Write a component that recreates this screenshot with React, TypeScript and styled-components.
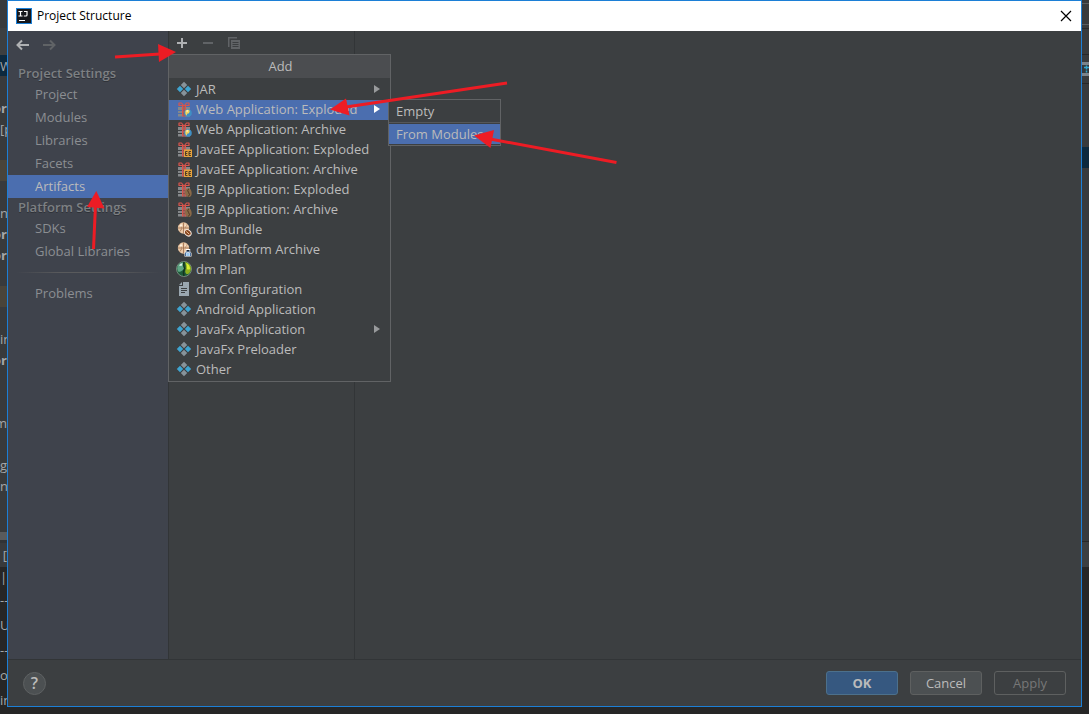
import React from "react";
import styled, { createGlobalStyle } from "styled-components";

const Global = createGlobalStyle`
  * { box-sizing: border-box; }
  body { margin: 0; background: #2b2b2b; font-family: "Open Sans", "Noto Sans", sans-serif; font-size: 13px; line-height: 20px; color: #bbbbbb; }
  button { font: inherit; color: inherit; background: none; border: 0; padding: 0; margin: 0; text-align: left; cursor: default; }
  ul { list-style: none; margin: 0; padding: 0; }
  h1, h2 { margin: 0; font-size: 13px; }
`;

const Desktop = styled.div`
  position: relative;
  display: flex;
  min-height: 100vh;
  padding-bottom: 7px;
  background: #262626;
  overflow: hidden;
`;

const Strip = styled.div`
  flex: none;
  width: 7px;
  overflow: hidden;
  margin-bottom: -7px;
  background: #262626;
`;

const StripRow = styled.div<{ $h?: number; $bg?: string; $bold?: boolean; $end?: boolean }>`
  display: flex;
  justify-content: ${(p) => (p.$end ? "flex-end" : "flex-start")};
  align-items: center;
  height: ${(p) => p.$h ?? 21}px;
  background: ${(p) => p.$bg ?? "#383a3c"};
  color: #a4a6a8;
  font-weight: ${(p) => (p.$bold ? 700 : 400)};
  overflow: hidden;
  white-space: nowrap;
`;

const Dialog = styled.section`
  position: relative;
  flex: 1;
  min-width: 0;
  display: flex;
  flex-direction: column;
  border: 1px solid #1c7fd6;
  background: #3c3f41;
`;

const TitleBar = styled.header`
  display: flex;
  align-items: center;
  gap: 5px;
  height: 30px;
  padding: 0 7px 0 8px;
  background: #ffffff;
`;

const Title = styled.h1`
  flex: 1;
  color: #000000;
  font-size: 12px;
  font-weight: 400;
`;

const IconButton = styled.button<{ $dim?: boolean }>`
  display: flex;
  align-items: center;
  justify-content: center;
  width: 16px;
  height: 16px;
  color: ${(p) => (p.$dim ? "#606366" : "#afb1b3")};
`;

const Body = styled.div`
  flex: 1;
  display: flex;
`;

const Sidebar = styled.nav`
  width: 160px;
  background: #3f434c;
`;

const NavHistory = styled.div`
  display: flex;
  gap: 10px;
  height: 33px;
  padding: 6px 7px;
`;

const NavHeading = styled.h2`
  height: 19px;
  padding-left: 10px;
  line-height: 19px;
  font-weight: 600;
  color: #7d8083;
  text-shadow: 0 1px 0 #2f3238;
`;

const NavItem = styled.button<{ $selected?: boolean }>`
  display: block;
  width: 100%;
  height: 23px;
  padding-left: 27px;
  line-height: 23px;
  color: ${(p) => (p.$selected ? "#bbbbbb" : "#8b8e92")};
  background: ${(p) => (p.$selected ? "#4b6eaf" : "transparent")};
`;

const NavRule = styled.hr`
  height: 1px;
  margin: 9px 8px;
  border: 0;
  background: linear-gradient(to right, #3f434c, #595a5c 30%, #595a5c 70%, #3f434c);
`;

const ListPane = styled.div`
  position: relative;
  width: 187px;
  border-left: 1px solid #323537;
  border-right: 1px solid #323537;
`;

const Toolbar = styled.div`
  display: flex;
  gap: 10px;
  padding: 4px 5px;
`;

const Popup = styled.div`
  position: absolute;
  top: 23px;
  left: -1px;
  z-index: 1;
  width: 223px;
  padding-bottom: 1px;
  border: 1px solid #616365;
  background: #3c3f41;
`;

const PopupTitle = styled.h2`
  height: 23px;
  margin-bottom: 2px;
  padding-left: 2px;
  line-height: 22px;
  text-align: center;
  font-weight: 400;
  background: #4b4d50;
`;

const MenuRow = styled.li`
  position: relative;
`;

const MenuItem = styled.button<{ $selected?: boolean }>`
  display: flex;
  align-items: center;
  gap: 4px;
  width: 100%;
  height: 20px;
  padding: 0 9px 2px 7px;
  white-space: nowrap;
  background: ${(p) => (p.$selected ? "#4b6eaf" : "transparent")};
`;

const Label = styled.span`
  flex: 1;
`;

const Submenu = styled.ul`
  position: absolute;
  top: -1px;
  left: 219px;
  z-index: 2;
  width: 113px;
  padding-bottom: 1px;
  border: 1px solid #616365;
  background: #3c3f41;

  ${MenuRow} + ${MenuRow} {
    border-top: 1px solid #555759;
    padding-top: 1px;
  }
  ${MenuRow}:first-child {
    padding: 1px 0;
  }
  ${MenuItem} {
    padding-bottom: 0;
  }
`;

const Editor = styled.main`
  flex: 1;
`;

const Footer = styled.footer`
  display: flex;
  align-items: center;
  gap: 12px;
  height: 47px;
  padding: 0 15px;
  border-top: 1px solid #323537;
`;

const HelpButton = styled.button`
  width: 23px;
  height: 23px;
  margin-right: auto;
  border: 1px solid #5e6162;
  border-radius: 50%;
  background: #4c5052;
  font-size: 16px;
  font-weight: 600;
  line-height: 20px;
  text-align: center;
`;

const ActionButton = styled.button<{ $kind?: "primary" | "disabled" }>`
  width: 72px;
  height: 24px;
  border: 1px solid ${(p) => (p.$kind === "primary" ? "#4c708c" : "#5e6060")};
  border-radius: 3px;
  line-height: 22px;
  text-align: center;
  font-weight: ${(p) => (p.$kind === "primary" ? 700 : 400)};
  color: ${(p) => (p.$kind === "disabled" ? "#777777" : "#bbbbbb")};
  background: ${(p) => (p.$kind === "primary" ? "#365880" : p.$kind === "disabled" ? "transparent" : "#4c5052")};
`;

const Annotations = styled.svg`
  position: absolute;
  top: 0;
  left: 0;
  z-index: 3;
  pointer-events: none;
`;

type IconKind = "artifact" | "web" | "ee" | "ejb" | "bundle" | "par" | "plan" | "config";

const Gift = () => (
  <>
    <path d="M2 6h12v3H2zM2 10h12v2H2zM2 13h12v2.500H2z" fill="#85888a" />
    <path d="M6 5h1.500v10.500H6zM8.500 5H10v10.500H8.500z" fill="#d9554d" />
    <path d="M7.500 5h1v10.500h-1z" fill="#9b5550" />
    <path d="M7.500 4.500 5.500 2H3v2.500zM8.500 4.500l2-2.500H13v2.500z" fill="none" stroke="#d9554d" strokeWidth="1.200" strokeLinejoin="round" />
  </>
);

const Walnut = () => (
  <>
    <circle cx="7.500" cy="7" r="5.700" fill="#e9c8a6" />
    <path d="M7.500 1.500v11M2 7h11M3.500 3.500q2 1 2 3M11.500 3.500q-2 1-2 3M3.500 10.500q2-1 2-3" fill="none" stroke="#9b6a4a" strokeWidth=".8" />
    <circle cx="5" cy="4.500" r="1.200" fill="#fff0dc" />
    <circle cx="9.500" cy="4.500" r="1" fill="#f8e0c4" />
  </>
);

function ItemIcon({ kind }: { kind: IconKind }) {
  return (
    <svg width="16" height="16" viewBox="0 0 16 16" aria-hidden="true">
      {kind === "artifact" && (
        <>
          <path d="M8 .8 11.200 4 8 7.200 4.800 4zM8 8.800 11.200 12 8 15.200 4.800 12z" fill="#87939a" />
          <path d="M4 4.800 7.200 8 4 11.200.8 8zM12 4.800 15.200 8 12 11.200 8.800 8z" fill="#3fa5d1" />
        </>
      )}
      {(kind === "web" || kind === "ee" || kind === "ejb") && <Gift />}
      {kind === "web" && (
        <>
          <circle cx="12" cy="12" r="3.800" fill="#3f8fc4" />
          <path d="M9.300 9.700q3-2 4.500.3l-.8 2.200-1.800.5-.5 2q-2-1.500-1.400-5z" fill="#f3d35e" />
          <path d="M10 9.900q1-1 2.300-.6l-1 1.700z" fill="#fff7d5" />
        </>
      )}
      {kind === "ee" && (
        <>
          <path d="M8 8.500h8v7.500H8z" fill="#e8a33d" />
          <path d="M11.500 10.500H9.500v4h2M9.500 12.500h1.800M15 10.500h-2v4h2M13 12.500h1.800" fill="none" stroke="#3b3325" strokeWidth=".9" />
        </>
      )}
      {kind === "ejb" && (
        <>
          <ellipse cx="12.300" cy="11.700" rx="3.300" ry="4.300" transform="rotate(-8 12 11.500)" fill="#8a6a48" />
          <path d="M12.700 7.700q-2 2 0 4t-.6 4" fill="none" stroke="#4f3924" />
        </>
      )}
      {(kind === "bundle" || kind === "par") && <Walnut />}
      {kind === "bundle" && (
        <>
          <ellipse cx="11.800" cy="11.800" rx="3.600" ry="2.800" transform="rotate(40 11.800 11.800)" fill="#87451e" stroke="#f4e7dc" />
          <path d="m10.300 10.500 3 2.700" stroke="#f0c79e" />
        </>
      )}
      {kind === "par" && (
        <>
          <path d="M9.800 8h4.400v2.500l1.300 1.500v3.600h-7V12l1.300-1.500z" fill="#fff" />
          <path d="M10.500 9h3v1.500h-3z" fill="#1b2430" />
          <path d="M10.300 12h3.400v3h-3.400z" fill="#9ac7ef" />
          <path d="M9.500 15v-3l1-1.200h3l1 1.200v3" fill="none" stroke="#1e4a80" strokeWidth=".8" />
        </>
      )}
      {kind === "plan" && (
        <>
          <circle cx="8" cy="8" r="7.500" fill="#1e5a3a" stroke="#b8c4b6" strokeWidth=".5" />
          <path d="M7 1.200Q1.500 2 1.200 7.500q.3 2 1.500 3.500 4.500-1 5.500-4Q7.500 4 7 1.200z" fill="#5fa584" />
          <path d="M9 1q6 1.500 6 7-.5 4.500-4 5.300Q8.500 12 9.500 9 10.500 5 9 1z" fill="#8fb01e" />
          <path d="M10 2q4 1.500 4 6-2 1-3 0 .3-3-1-6z" fill="#d9ee35" />
          <path d="M8 1q-1 4 .8 6.500Q6.500 11 8 15" fill="none" stroke="#15331e" strokeWidth="1.300" />
          <path d="M3 4.500Q4.500 2.200 6.500 2.200L5.500 5z" fill="#e4f2ea" />
        </>
      )}
      {kind === "config" && (
        <>
          <path d="M7 1h6v14H3V5h4zM6 1v3H3z" fill="#9aa7b0" />
          <path d="M5 7.500h6M5 9.500h6M5 11.500h4" stroke="#3c3f41" />
        </>
      )}
    </svg>
  );
}

const Chevron = ({ active }: { active?: boolean }) => (
  <svg width="8" height="10" viewBox="0 0 8 10" aria-hidden="true">
    <path d="M1 1v8l6-4z" fill={active ? "#ffffff" : "#989a9c"} />
  </svg>
);

const artifactTypes: { label: string; icon: IconKind; more?: boolean; open?: boolean }[] = [
  { label: "JAR", icon: "artifact", more: true },
  { label: "Web Application: Exploded", icon: "web", more: true, open: true },
  { label: "Web Application: Archive", icon: "web" },
  { label: "JavaEE Application: Exploded", icon: "ee" },
  { label: "JavaEE Application: Archive", icon: "ee" },
  { label: "EJB Application: Exploded", icon: "ejb" },
  { label: "EJB Application: Archive", icon: "ejb" },
  { label: "dm Bundle", icon: "bundle" },
  { label: "dm Platform Archive", icon: "par" },
  { label: "dm Plan", icon: "plan" },
  { label: "dm Configuration", icon: "config" },
  { label: "Android Application", icon: "artifact" },
  { label: "JavaFx Application", icon: "artifact", more: true },
  { label: "JavaFx Preloader", icon: "artifact" },
  { label: "Other", icon: "artifact" },
];

const codeLines: { text?: string; bg?: string; bold?: boolean; end?: boolean }[] = [
  { text: "W", bg: "#0d293e" },
  {},
  { text: "or", bold: true, end: true },
  { text: "[p" },
  {},
  { bg: "#49443a" },
  {},
  { text: "ns" },
  { text: "or", bold: true, end: true },
  { text: "or", bold: true, end: true },
  {},
  { bg: "#49443a" },
  {},
  { text: "in" },
  { text: "or", bold: true, end: true },
  {},
  {},
  { text: "m", end: true },
  {},
  { text: "g" },
  { text: "ns" },
];

const consoleLines = ["|", "--", "U", "--", "o", "in"];

export default function App() {
  return (
    <>
      <Global />
      <Desktop>
        <Strip aria-hidden="true">
          <StripRow $h={28} />
          <StripRow $h={27} $bg="#3c3f41" />
          {codeLines.map((line, i) => (
            <StripRow key={i} $bg={line.bg} $bold={line.bold} $end={line.end}>
              {line.text}
            </StripRow>
          ))}
          <StripRow $h={36} />
          <StripRow $h={8} $bg="#595b5d" />
          <StripRow $h={3} $bg="#313335" />
          <StripRow $h={24} $end>[</StripRow>
          {consoleLines.map((text, i) => (
            <StripRow key={i} $h={i ? 25 : 20} $bg="#262626">
              {text}
            </StripRow>
          ))}
        </Strip>

        <Dialog role="dialog" aria-labelledby="dialog-title">
          <TitleBar>
            <svg width="16" height="16" viewBox="0 0 16 16" aria-hidden="true">
              <path d="M0 0h16v16H0z" fill="#1c7fd6" />
              <path d="M1 1h14v14H1z" fill="#15171c" />
              <path d="M2.500 3.500h4M4.500 3.500v4.500M2.500 8h4M8 3.500h3V7q0 1-1 1H7.800M3 12.500h6" fill="none" stroke="#fff" strokeWidth="1.200" />
            </svg>
            <Title id="dialog-title">Project Structure</Title>
            <IconButton aria-label="Close">
              <svg width="12" height="12" viewBox="0 0 12 12">
                <path d="m1 1 10 10M11 1 1 11" stroke="#000" strokeWidth="1.200" />
              </svg>
            </IconButton>
          </TitleBar>

          <Body>
            <Sidebar>
              <NavHistory>
                <IconButton aria-label="Back">
                  <svg width="16" height="16" viewBox="0 0 16 16">
                    <path d="M14 8H2.500M7 3.500 2.500 8 7 12.500" fill="none" stroke="currentColor" strokeWidth="2" />
                  </svg>
                </IconButton>
                <IconButton aria-label="Forward" $dim>
                  <svg width="16" height="16" viewBox="0 0 16 16">
                    <path d="M2 8h11.500M9 3.500 13.500 8 9 12.500" fill="none" stroke="currentColor" strokeWidth="2" />
                  </svg>
                </IconButton>
              </NavHistory>
              <NavHeading>Project Settings</NavHeading>
              <NavItem>Project</NavItem>
              <NavItem>Modules</NavItem>
              <NavItem>Libraries</NavItem>
              <NavItem>Facets</NavItem>
              <NavItem $selected aria-current="page">Artifacts</NavItem>
              <NavHeading>Platform Settings</NavHeading>
              <NavItem>SDKs</NavItem>
              <NavItem>Global Libraries</NavItem>
              <NavRule />
              <NavItem>Problems</NavItem>
            </Sidebar>

            <ListPane>
              <Toolbar>
                <IconButton aria-label="Add">
                  <svg width="16" height="16" viewBox="0 0 16 16">
                    <path d="M8 3v10M3 8h10" stroke="currentColor" strokeWidth="2" />
                  </svg>
                </IconButton>
                <IconButton aria-label="Remove" $dim>
                  <svg width="16" height="16" viewBox="0 0 16 16">
                    <path d="M3 8h10" stroke="currentColor" strokeWidth="2" />
                  </svg>
                </IconButton>
                <IconButton aria-label="Copy" $dim>
                  <svg width="16" height="16" viewBox="0 0 16 16">
                    <path d="M2 2h9v1.500H3.500V12H2z" fill="currentColor" />
                    <path d="M5 5h9v9H5z" fill="currentColor" />
                    <path d="M6.500 7.500h6M6.500 9.500h6M6.500 11.500h6" stroke="#3c3f41" />
                  </svg>
                </IconButton>
              </Toolbar>

              <Popup>
                <PopupTitle>Add</PopupTitle>
                <ul>
                  {artifactTypes.map((item) => (
                    <MenuRow key={item.label}>
                      <MenuItem $selected={item.open}>
                        <ItemIcon kind={item.icon} />
                        <Label>{item.label}</Label>
                        {item.more && <Chevron active={item.open} />}
                      </MenuItem>
                      {item.open && (
                        <Submenu>
                          <MenuRow>
                            <MenuItem>Empty</MenuItem>
                          </MenuRow>
                          <MenuRow>
                            <MenuItem $selected>From Modules</MenuItem>
                          </MenuRow>
                        </Submenu>
                      )}
                    </MenuRow>
                  ))}
                </ul>
              </Popup>
            </ListPane>

            <Editor />
          </Body>

          <Footer>
            <HelpButton aria-label="Help">?</HelpButton>
            <ActionButton $kind="primary">OK</ActionButton>
            <ActionButton>Cancel</ActionButton>
            <ActionButton $kind="disabled" disabled>Apply</ActionButton>
          </Footer>
        </Dialog>

        <Strip aria-hidden="true">
          <StripRow $h={3} />
          <StripRow $h={1} $bg="#5a5d5f" />
          <StripRow $h={20} />
          <StripRow $h={1} $bg="#5a5d5f" />
          <StripRow $h={3} />
          <StripRow $h={1} $bg="#282828" />
          <StripRow $h={25} />
          <StripRow $h={1} $bg="#282828" />
          <StripRow $h={7} />
          <StripRow $h={14} $bg="#7b838a">
            <svg width="7" height="14" viewBox="0 0 7 14">
              <path d="M0 3h7v8H0z" fill="#34383b" />
              <path d="M2 5.500h5M4.500 3.500v4M4.500 8.500v2" stroke="#35a5cc" strokeWidth="1.500" />
            </svg>
          </StripRow>
          <StripRow $h={7} />
          <StripRow $h={1} $bg="#282828" />
          <StripRow $h={63} />
          <StripRow $bg="#0d293e" />
          <StripRow $h={373} />
          <StripRow $h={1} $bg="#282828" />
          <StripRow $h={25} $bg="#3c3f41" />
        </Strip>

        <Annotations width="640" height="260" viewBox="0 0 640 260" aria-hidden="true">
          <g stroke="#ed1c24" strokeWidth="3">
            <path d="M115 57 160 54" />
            <path d="M93.500 249 95.500 205" />
            <path d="M507 83 346 107" />
            <path d="M616.500 162.500 490 139" />
          </g>
          <g fill="#ed1c24">
            <path d="M176 52 158 44 159 62z" />
            <path d="M96.300 191 87 207 104.500 208.500z" />
            <path d="M330 109.500 346 98.500 349.500 115.500z" />
            <path d="M474 135.500 494 130 490.500 148z" />
          </g>
        </Annotations>
      </Desktop>
    </>
  );
}
